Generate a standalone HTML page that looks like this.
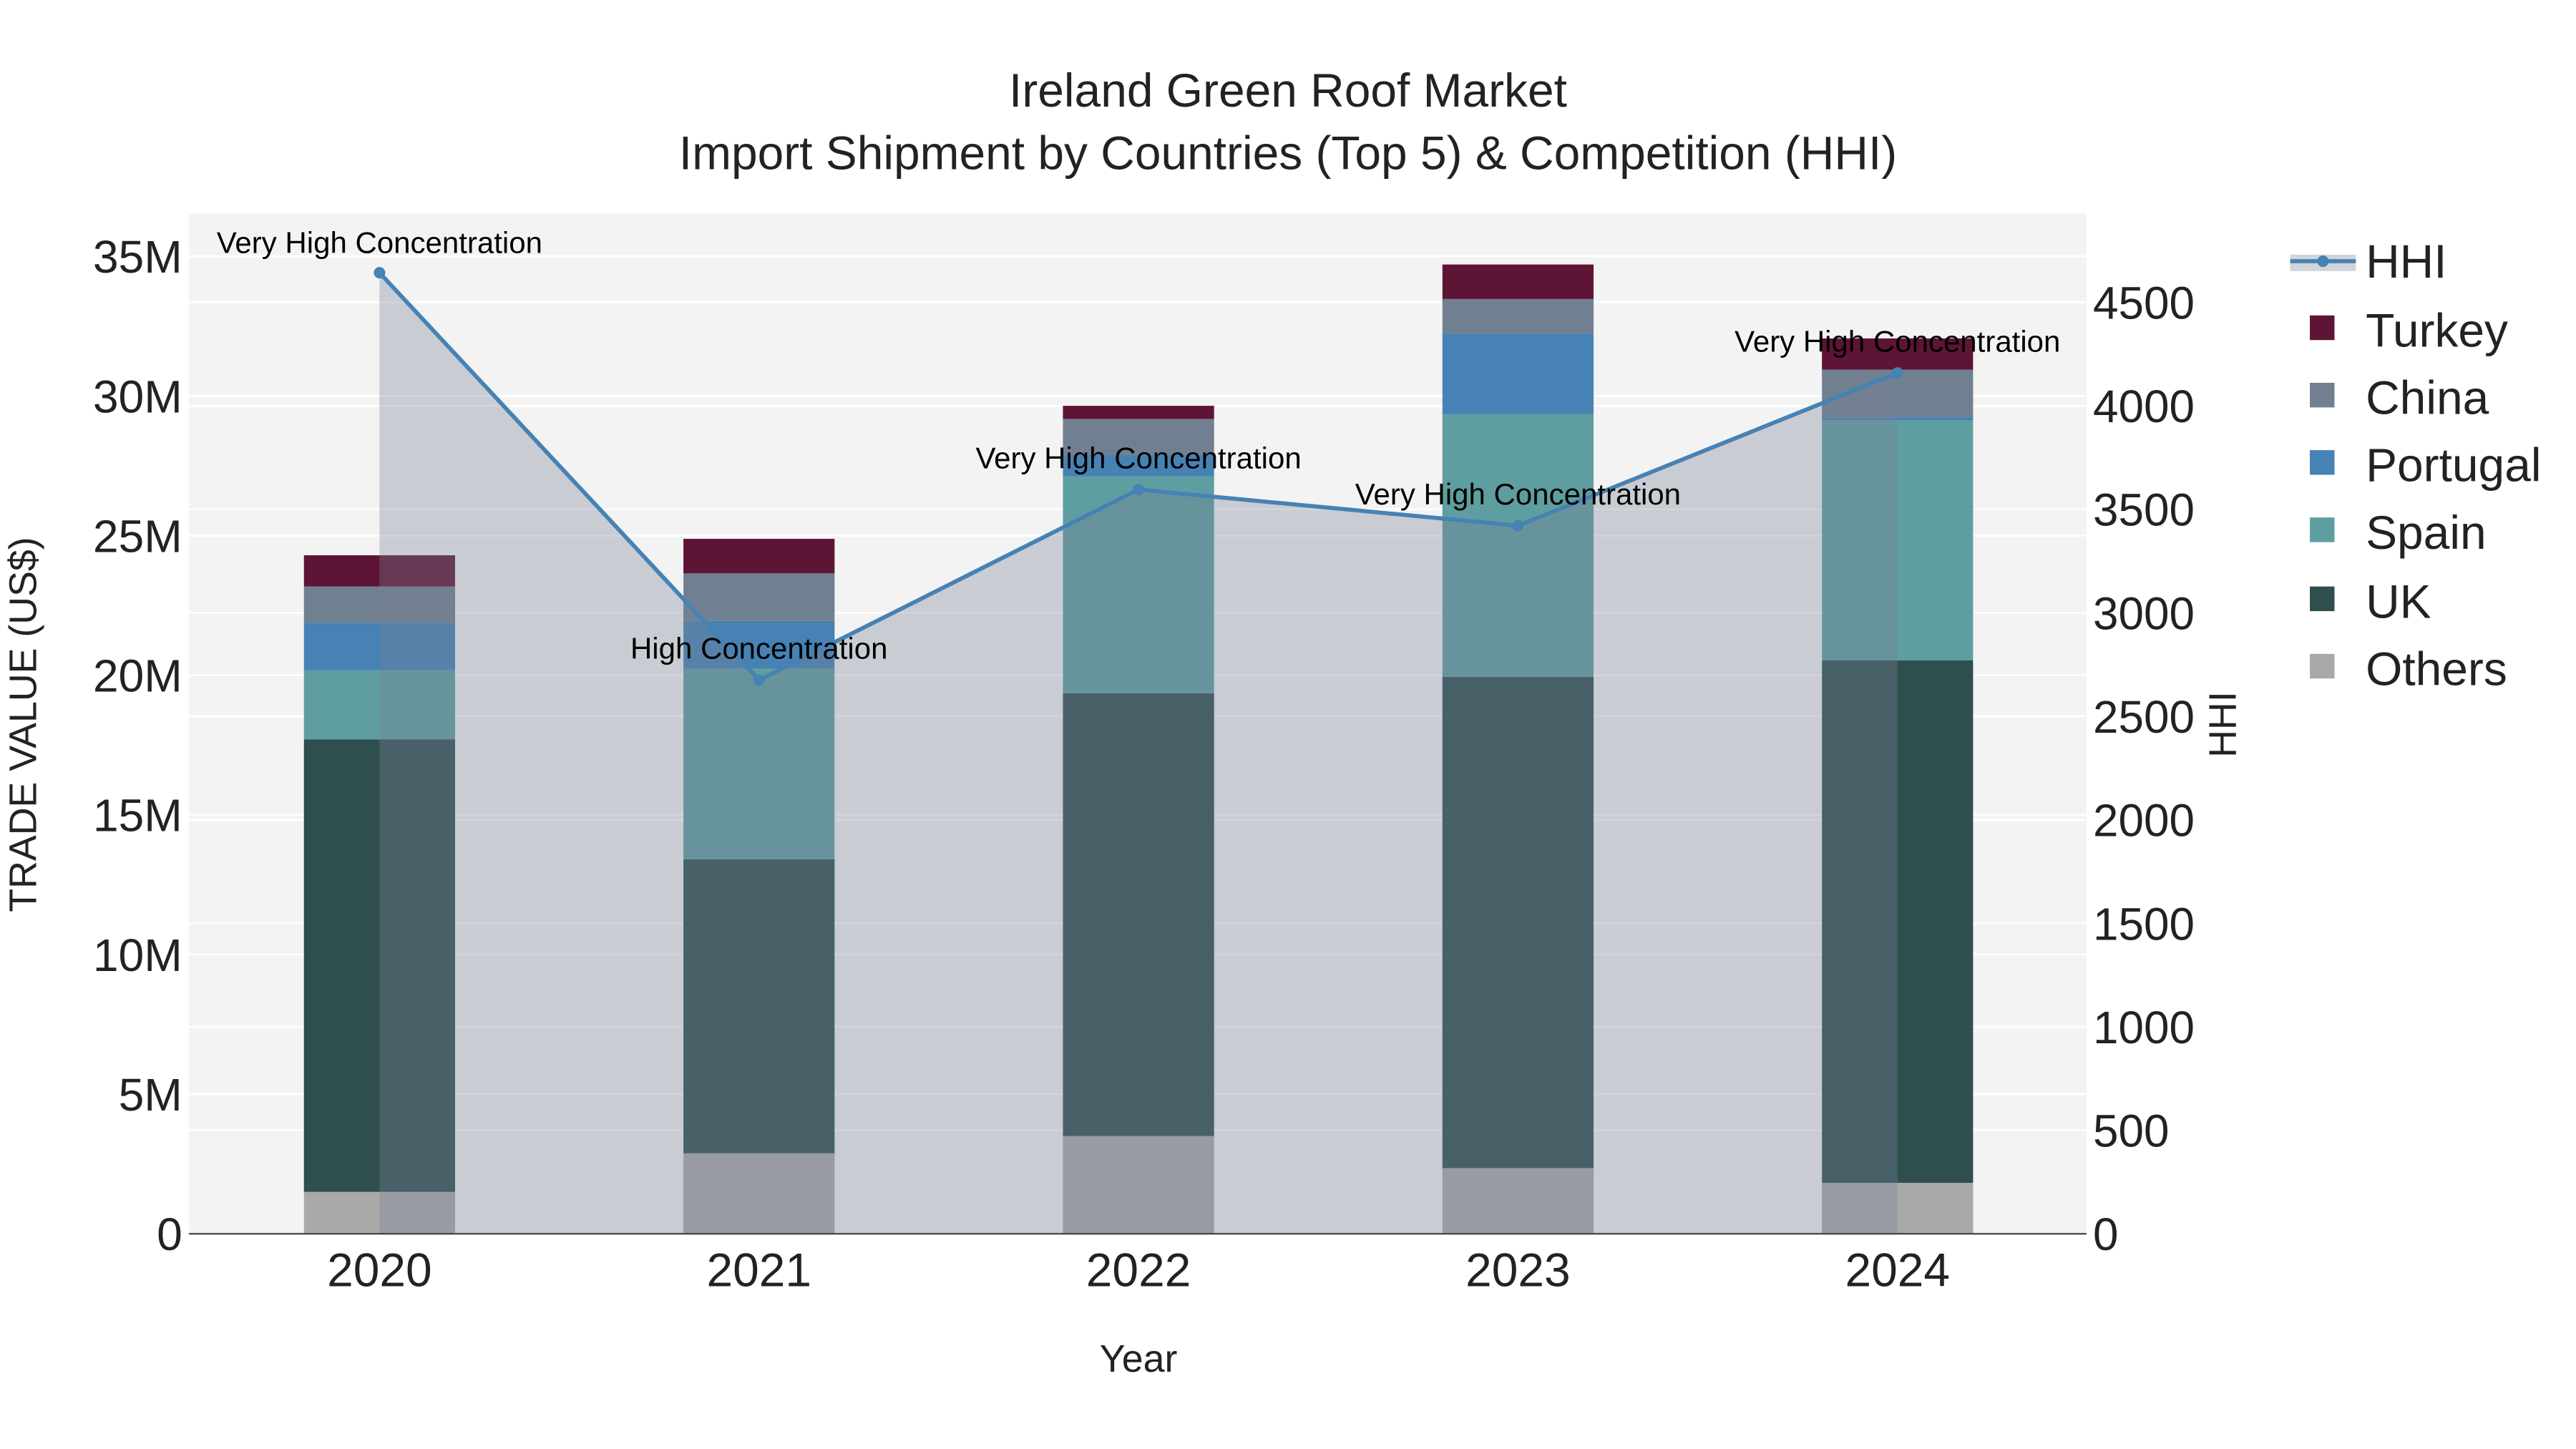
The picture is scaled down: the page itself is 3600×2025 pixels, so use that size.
<!DOCTYPE html>
<html><head><meta charset="utf-8"><style>
html,body{margin:0;padding:0;background:#fff;}
svg{display:block;}
text{font-family:"Liberation Sans",Arial,sans-serif;}
</style></head><body>
<svg width="3600" height="2025" viewBox="0 0 1568 882" preserveAspectRatio="none" xmlns="http://www.w3.org/2000/svg">
<rect width="1600" height="900" fill="#fff"/>
<rect x="115" y="130" width="1155" height="621" fill="#f3f3f3"/>
<g stroke="#fff" stroke-width="1.2">
<line x1="115" x2="1270" y1="666" y2="666"/><line x1="115" x2="1270" y1="581" y2="581"/>
<line x1="115" x2="1270" y1="496" y2="496"/><line x1="115" x2="1270" y1="411" y2="411"/>
<line x1="115" x2="1270" y1="326" y2="326"/><line x1="115" x2="1270" y1="241" y2="241"/>
<line x1="115" x2="1270" y1="156" y2="156"/>
<line x1="115" x2="1270" y1="688" y2="688"/><line x1="115" x2="1270" y1="625" y2="625"/>
<line x1="115" x2="1270" y1="562" y2="562"/><line x1="115" x2="1270" y1="499" y2="499"/>
<line x1="115" x2="1270" y1="436" y2="436"/><line x1="115" x2="1270" y1="373" y2="373"/>
<line x1="115" x2="1270" y1="310" y2="310"/><line x1="115" x2="1270" y1="247" y2="247"/>
<line x1="115" x2="1270" y1="184" y2="184"/>
</g>
<g>
<rect x="185" y="725.5" width="92" height="25.5" fill="#a9a9a9"/>
<rect x="185" y="450" width="92" height="275.5" fill="#2f4f4f"/>
<rect x="185" y="408" width="92" height="42" fill="#5f9ea0"/>
<rect x="185" y="379" width="92" height="29" fill="#4682b4"/>
<rect x="185" y="357" width="92" height="22" fill="#708090"/>
<rect x="185" y="338" width="92" height="19" fill="#5e1434"/>

<rect x="416" y="702" width="92" height="49" fill="#a9a9a9"/>
<rect x="416" y="523" width="92" height="179" fill="#2f4f4f"/>
<rect x="416" y="407" width="92" height="116" fill="#5f9ea0"/>
<rect x="416" y="378" width="92" height="29" fill="#4682b4"/>
<rect x="416" y="349" width="92" height="29" fill="#708090"/>
<rect x="416" y="328" width="92" height="21" fill="#5e1434"/>

<rect x="647" y="691.5" width="92" height="59.5" fill="#a9a9a9"/>
<rect x="647" y="422" width="92" height="269.5" fill="#2f4f4f"/>
<rect x="647" y="290" width="92" height="132" fill="#5f9ea0"/>
<rect x="647" y="277" width="92" height="13" fill="#4682b4"/>
<rect x="647" y="255" width="92" height="22" fill="#708090"/>
<rect x="647" y="247" width="92" height="8" fill="#5e1434"/>

<rect x="878" y="711" width="92" height="40" fill="#a9a9a9"/>
<rect x="878" y="412" width="92" height="299" fill="#2f4f4f"/>
<rect x="878" y="252" width="92" height="160" fill="#5f9ea0"/>
<rect x="878" y="203" width="92" height="49" fill="#4682b4"/>
<rect x="878" y="182" width="92" height="21" fill="#708090"/>
<rect x="878" y="161" width="92" height="21" fill="#5e1434"/>

<rect x="1109" y="720" width="92" height="31" fill="#a9a9a9"/>
<rect x="1109" y="402" width="92" height="318" fill="#2f4f4f"/>
<rect x="1109" y="256" width="92" height="146" fill="#5f9ea0"/>
<rect x="1109" y="254" width="92" height="2" fill="#4682b4"/>
<rect x="1109" y="225" width="92" height="29" fill="#708090"/>
<rect x="1109" y="206" width="92" height="19" fill="#5e1434"/>
</g>
<polygon points="231,166 462,414 693,298 924,320 1155,227 1155,751 231,751" fill="rgb(119,129,150)" fill-opacity="0.34"/>
<polyline points="231,166 462,414 693,298 924,320 1155,227" fill="none" stroke="#4682b4" stroke-width="2.5"/>
<g fill="#4682b4"><circle cx="231" cy="166" r="3.5"/><circle cx="462" cy="414" r="3.5"/><circle cx="693" cy="298" r="3.5"/><circle cx="924" cy="320" r="3.5"/><circle cx="1155" cy="227" r="3.5"/></g>
<line x1="115" x2="1270" y1="751" y2="751" stroke="#444" stroke-width="1"/>
<g font-size="18.3" text-anchor="middle" fill="#000">
<text x="231" y="154">Very High Concentration</text>
<text x="462" y="401">High Concentration</text>
<text x="693" y="285">Very High Concentration</text>
<text x="924" y="307">Very High Concentration</text>
<text x="1155" y="214">Very High Concentration</text>
</g>
<g font-size="28.7" text-anchor="middle" fill="#222">
<text x="784" y="65">Ireland Green Roof Market</text>
<text x="784" y="103">Import Shipment by Countries (Top 5) &amp; Competition (HHI)</text>
</g>
<g font-size="28" text-anchor="end" fill="#222">
<text x="111" y="761">0</text><text x="111" y="676">5M</text><text x="111" y="591">10M</text>
<text x="111" y="506">15M</text><text x="111" y="421">20M</text><text x="111" y="336">25M</text>
<text x="111" y="251">30M</text><text x="111" y="166">35M</text>
</g>
<g font-size="27.8" text-anchor="start" fill="#222">
<text x="1274" y="761">0</text><text x="1274" y="698">500</text><text x="1274" y="635">1000</text>
<text x="1274" y="572">1500</text><text x="1274" y="509">2000</text><text x="1274" y="446">2500</text>
<text x="1274" y="383">3000</text><text x="1274" y="320">3500</text><text x="1274" y="257">4000</text>
<text x="1274" y="194">4500</text>
</g>
<g font-size="28.7" text-anchor="middle" fill="#222">
<text x="231" y="783">2020</text><text x="462" y="783">2021</text><text x="693" y="783">2022</text>
<text x="924" y="783">2023</text><text x="1155" y="783">2024</text>
</g>
<text x="693" y="835" font-size="23.4" text-anchor="middle" fill="#222">Year</text>
<text transform="translate(22,441) rotate(-90)" font-size="23.4" text-anchor="middle" fill="#222">TRADE VALUE (US$)</text>
<text transform="translate(1361,441) rotate(-90)" font-size="23.4" text-anchor="middle" fill="#222">HHI</text>
<g font-size="28.7" fill="#222">
<rect x="1394" y="155" width="40" height="10" fill="rgb(119,129,150)" fill-opacity="0.34"/>
<line x1="1394" x2="1434" y1="159" y2="159" stroke="#4682b4" stroke-width="2.5"/>
<circle cx="1414" cy="159" r="3.5" fill="#4682b4"/>
<text x="1440" y="169">HHI</text>
<rect x="1406" y="192" width="15" height="15" fill="#5e1434"/><text x="1440" y="211">Turkey</text>
<rect x="1406" y="233" width="15" height="15" fill="#708090"/><text x="1440" y="252">China</text>
<rect x="1406" y="274" width="15" height="15" fill="#4682b4"/><text x="1440" y="293">Portugal</text>
<rect x="1406" y="315" width="15" height="15" fill="#5f9ea0"/><text x="1440" y="334">Spain</text>
<rect x="1406" y="357" width="15" height="15" fill="#2f4f4f"/><text x="1440" y="376">UK</text>
<rect x="1406" y="398" width="15" height="15" fill="#a9a9a9"/><text x="1440" y="417">Others</text>
</g>
</svg>
</body></html>
